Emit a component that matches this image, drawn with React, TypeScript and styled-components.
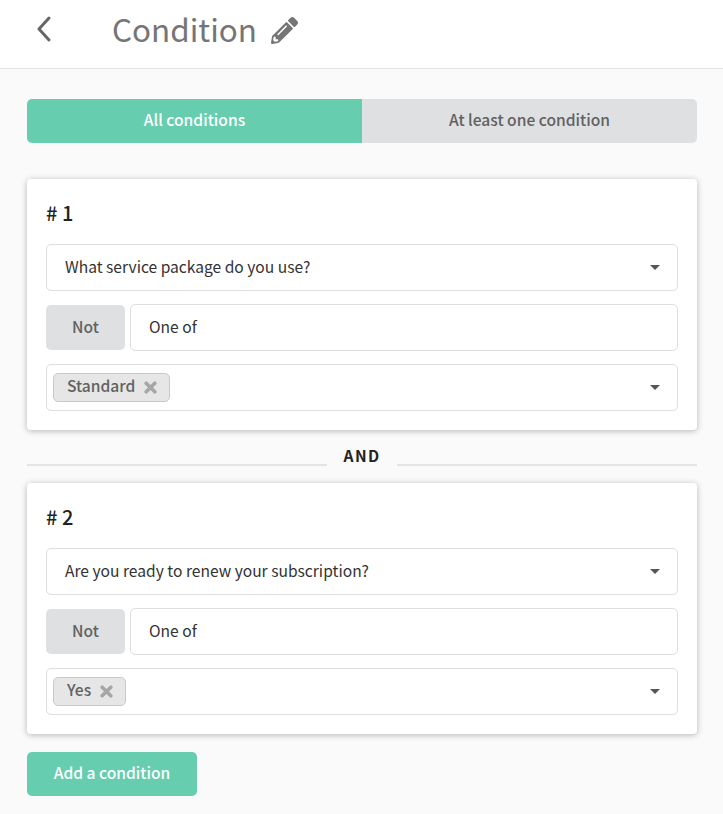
import { createGlobalStyle } from "styled-components";
import styled from "styled-components";
import { FaPencilAlt } from "react-icons/fa";

interface ICondition {
  id: number;
  question: string;
  answer: string;
}

const conditions: ICondition[] = [
  { id: 1, question: "What service package do you use?", answer: "Standard" },
  { id: 2, question: "Are you ready to renew your subscription?", answer: "Yes" },
];

const GlobalStyle = createGlobalStyle`
  html, body {
    margin: 0;
    padding: 0;
    background-color: #fafafa;
  }
  body {
    font-family: "Noto Sans CJK JP", "Noto Sans", sans-serif;
    font-size: 15.6px;
    color: #333333;
  }
  * {
    box-sizing: border-box;
  }
`;

const Page = styled.div`
  width: 723px;
  height: 814px;
  overflow: hidden;
`;

const Header = styled.header`
  display: flex;
  align-items: center;
  height: 69px;
  padding-left: 36px;
  padding-bottom: 10px;
  background-color: #ffffff;
  border-bottom: 1px solid #e4e4e4;
`;

const BackIcon = styled.svg`
  width: 16px;
  height: 26px;
  margin-right: 60px;
  margin-top: 6px;
  margin-bottom: 6px;
  fill: none;
  stroke: #666666;
  stroke-width: 3;
  stroke-linecap: round;
  stroke-linejoin: round;
`;

const Title = styled.h1`
  margin: 0 14px 0 0;
  font-size: 31.4px;
  line-height: 40px;
  font-weight: 400;
  color: #757575;
`;

const EditIcon = styled(FaPencilAlt)`
  width: 27px;
  height: 27px;
  margin-top: 2px;
  color: #757575;
`;

const Content = styled.main`
  display: flex;
  flex-direction: column;
  padding: 30px 26px 0 27px;
`;

const Tabs = styled.div`
  display: flex;
  height: 44px;
  margin-bottom: 36px;
`;

const Tab = styled.div<{ $active?: boolean }>`
  flex: 1;
  display: flex;
  align-items: center;
  justify-content: center;
  padding-bottom: 4px;
  font-weight: 500;
  color: ${(props) => (props.$active ? "#ffffff" : "#616161")};
  background-color: ${(props) => (props.$active ? "#66ceae" : "#dfe0e2")};
  border-radius: ${(props) => (props.$active ? "5px 0 0 5px" : "0 5px 5px 0")};
`;

const Card = styled.section`
  display: flex;
  flex-direction: column;
  height: 251px;
  padding: 20px 19px 0 19px;
  background-color: #ffffff;
  border-radius: 4px;
  box-shadow: 0 1px 6px rgba(0, 0, 0, 0.28);
`;

const CardTitle = styled.h4`
  margin: 0 0 18px 0;
  height: 27px;
  font-size: 20px;
  line-height: 27px;
  font-weight: 500;
  color: #222222;
`;

const Field = styled.div`
  display: flex;
  align-items: center;
  justify-content: space-between;
  height: 47px;
  padding: 0 18px;
  background-color: #ffffff;
  border: 1px solid #dedede;
  border-radius: 5px;
`;

const FieldText = styled.span`
  margin-bottom: 4px;
`;

const TagField = styled(Field)`
  padding-left: 6px;
`;

const Caret = styled.span`
  width: 0;
  height: 0;
  margin-right: -1px;
  margin-bottom: 1px;
  border-left: 5px solid transparent;
  border-right: 5px solid transparent;
  border-top: 5px solid #555555;
`;

const OperatorRow = styled.div`
  display: flex;
  gap: 5px;
  margin: 13px 0;
  align-items: center;
`;

const NotButton = styled.div`
  flex: 0 0 79px;
  display: flex;
  align-items: center;
  justify-content: center;
  height: 45px;
  padding-bottom: 4px;
  font-weight: 500;
  color: #616161;
  background-color: #dfe0e2;
  border-radius: 5px;
`;

const OperatorField = styled(Field)`
  flex: 1;
`;

const Tag = styled.div`
  display: flex;
  align-items: center;
  gap: 9px;
  height: 29px;
  margin-bottom: 1px;
  padding: 0 12px 5px 13px;
  font-weight: 500;
  color: #616161;
  background-color: #e6e6e6;
  border: 1px solid #c9c9c9;
  border-radius: 5px;
`;

const TagRemove = styled.svg`
  width: 13px;
  height: 13px;
  margin-top: 5px;
  fill: none;
  stroke: #a6a6a6;
  stroke-width: 3.6;
  stroke-linecap: round;
`;

const Separator = styled.div`
  display: flex;
  align-items: center;
  justify-content: space-between;
  height: 53px;
`;

const SeparatorLine = styled.div`
  width: 300px;
  height: 2px;
  margin-top: 17px;
  background-color: #e4e4e4;
`;

const SeparatorLabel = styled.span`
  margin-bottom: 4px;
  font-weight: 700;
  letter-spacing: 1.4px;
  color: #222222;
`;

const AddButton = styled.button`
  align-self: flex-start;
  width: 170px;
  height: 44px;
  margin-top: 18px;
  padding: 0 0 4px 0;
  font-family: inherit;
  font-size: 15.6px;
  font-weight: 500;
  color: #ffffff;
  background-color: #66ceae;
  border: 0;
  border-radius: 5px;
`;

function ConditionCard({ condition }: { condition: ICondition }) {
  return (
    <Card>
      <CardTitle># {condition.id}</CardTitle>
      <Field>
        <FieldText>{condition.question}</FieldText>
        <Caret />
      </Field>
      <OperatorRow>
        <NotButton>Not</NotButton>
        <OperatorField>
          <FieldText>One of</FieldText>
        </OperatorField>
      </OperatorRow>
      <TagField>
        <Tag>
          {condition.answer}
          <TagRemove viewBox="0 0 13 13">
            <path d="M2.2 2.2l8.6 8.6M10.8 2.2l-8.6 8.6" />
          </TagRemove>
        </Tag>
        <Caret />
      </TagField>
    </Card>
  );
}

export default function App() {
  return (
    <Page>
      <GlobalStyle />
      <Header>
        <BackIcon viewBox="0 0 16 26">
          <path d="M13 2 3 13l10 11" />
        </BackIcon>
        <Title>Condition</Title>
        <EditIcon />
      </Header>
      <Content>
        <Tabs>
          <Tab $active>All conditions</Tab>
          <Tab>At least one condition</Tab>
        </Tabs>
        <ConditionCard condition={conditions[0]} />
        <Separator>
          <SeparatorLine />
          <SeparatorLabel>AND</SeparatorLabel>
          <SeparatorLine />
        </Separator>
        <ConditionCard condition={conditions[1]} />
        <AddButton>Add a condition</AddButton>
      </Content>
    </Page>
  );
}
